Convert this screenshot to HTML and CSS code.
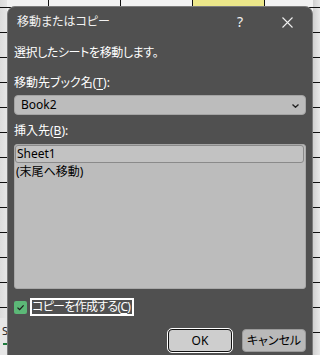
FILE: index.html
```html
<!DOCTYPE html>
<html lang="ja">
<head>
<meta charset="utf-8">
<link rel="stylesheet" href="styles.css">
</head>
<body>
<div class="sheet-left"><span class="tab-s">S</span></div>
<div class="dialog">
  <div class="titlebar">
    <span class="title">移動またはコピー</span>
    <span class="help">?</span>
    <svg class="close" width="11" height="11" viewBox="0 0 11 11"><path d="M0.5 0.5L10.5 10.5M10.5 0.5L0.5 10.5" stroke="#f0f0f0" stroke-width="1.1" fill="none"/></svg>
  </div>
  <div class="body">
    <div class="msg">選択したシートを移動します。</div>
    <div class="label l1">移動先ブック名(<u>T</u>):</div>
    <div class="select"><span>Book2</span>
      <svg class="chev" width="7" height="4" viewBox="0 0 7 4"><path d="M0.5 0.5L3.5 3.3L6.5 0.5" stroke="#222" stroke-width="1.3" fill="none"/></svg>
    </div>
    <div class="label l2">挿入先(<u>B</u>):</div>
    <div class="list">
      <div class="item sel">Sheet1</div>
      <div class="item">(末尾へ移動)</div>
    </div>
    <div class="check-row">
      <span class="box"><svg width="13" height="13" viewBox="0 0 13 13"><path d="M3.5 6.6L5.6 8.6L9.6 4.4" stroke="#1c1c1c" stroke-width="1.3" fill="none"/></svg></span>
      <span class="check-label">コピーを作成する(<u>C</u>)</span>
    </div>
    <div class="buttons">
      <button class="btn ok">OK</button>
      <button class="btn cancel">キャンセル</button>
    </div>
  </div>
</div>
</body>
</html>
```
FILE: styles.css
```css
html, body {
  margin: 0;
  padding: 0;
}
body {
  width: 320px;
  height: 355px;
  overflow: hidden;
  position: relative;
  font-family: "Noto Sans", "Noto Sans CJK JP", sans-serif;
  font-size: 12px;
  font-feature-settings: "palt";
  background:
    linear-gradient(#ece78a, #ece78a) 193px 0 / 71px 6px no-repeat,
    linear-gradient(to right, transparent 71px, #111 71px) -23px 0 / 72px 100%,
    linear-gradient(to bottom, transparent 24px, #111 24px) 0 8px / 100% 25px,
    linear-gradient(to right, #dcdcdc, #e6e6e6 7px, #f2f2f2 7px, #f2f2f2 313px, #d0d0d0 313px, #e8e8e8);
}
.sheet-left {
  position: absolute;
  left: 0;
  top: 318px;
  width: 7px;
  height: 37px;
  background: #e6e6e6;
}
.tab-s {
  position: absolute;
  left: 2px;
  top: 6px;
  font-size: 11px;
  color: #222;
  line-height: 14px;
}
.sheet-left::after {
  content: "";
  position: absolute;
  left: 3px;
  top: 25px;
  width: 4px;
  height: 2px;
  background: #1d7a3c;
}
.dialog {
  position: absolute;
  left: 7px;
  top: 6px;
  width: 304px;
  height: 360px;
  background: #505050;
  border: 1px solid #7c7c7c;
  border-radius: 8px 8px 0 0;
  color: #ffffff;
  display: flex;
  flex-direction: column;
}
.titlebar {
  height: 30px;
  display: flex;
  align-items: center;
  padding-left: 9px;
}
.title {
  flex: 1;
  line-height: 16px;
  color: #f2f2f2;
}
.help {
  width: 10px;
  margin-right: 35px;
  line-height: 16px;
  font-size: 14px;
  color: #f2f2f2;
}
.close {
  margin-right: 19px;
}
.body {
  padding: 0 6px;
  display: flex;
  flex-direction: column;
}
u {
  text-decoration-thickness: 1px;
  text-underline-offset: 2px;
}
.msg {
  margin-top: 8px;
  line-height: 16px;
  letter-spacing: -0.4px;
}
.label {
  line-height: 16px;
}
.l1 {
  margin-top: 14px;
}
.select {
  margin-top: 4px;
  height: 20px;
  box-sizing: border-box;
  background: #bcbcbc;
  border: 1px solid #a4a4a4;
  border-radius: 4px;
  color: #000;
  display: flex;
  align-items: center;
  justify-content: space-between;
  padding: 0 6px 0 6px;
  line-height: 16px;
}
.chev {
  margin-top: 1px;
}
.l2 {
  margin-top: 8px;
}
.list {
  margin-top: 5px;
  height: 145px;
  box-sizing: border-box;
  background: #bcbcbc;
  border: 1px solid #a8a8a8;
  border-radius: 3px;
  color: #000;
  padding: 0;
}
.item {
  height: 17px;
  line-height: 17px;
  padding-left: 1px;
}
.item.sel {
  height: 18px;
  line-height: 16px;
  box-sizing: border-box;
  border: 1px solid #8a8a8a;
  border-radius: 3px;
  background: #c2c2c2;
  margin-right: 1px;
}
.check-row {
  margin-top: 9px;
  height: 18px;
  display: flex;
  align-items: center;
}
.box {
  width: 13px;
  height: 13px;
  background: #5cb877;
  border-radius: 2px;
  display: flex;
}
.check-label {
  margin-left: 3px;
  height: 18px;
  box-sizing: border-box;
  border: 2px solid #ffffff;
  line-height: 14px;
  padding: 0 2px 0 0;
  letter-spacing: -0.7px;
  color: #fff;
}
.buttons {
  margin-top: 13px;
  display: flex;
  justify-content: flex-end;
  gap: 10px;
}
.btn {
  height: 23px;
  width: 64px;
  box-sizing: border-box;
  border-radius: 4px;
  font-family: "Noto Sans", "Noto Sans CJK JP", sans-serif;
  font-size: 12px;
  font-feature-settings: "palt";
  color: #000;
  padding: 0;
  line-height: 16px;
}
.ok {
  background: #cecece;
  border: 1px solid #111;
  outline: 1px solid #ffffff;
}
.cancel {
  background: #b9b9b9;
  border: 1px solid #9a9a9a;
}
```
